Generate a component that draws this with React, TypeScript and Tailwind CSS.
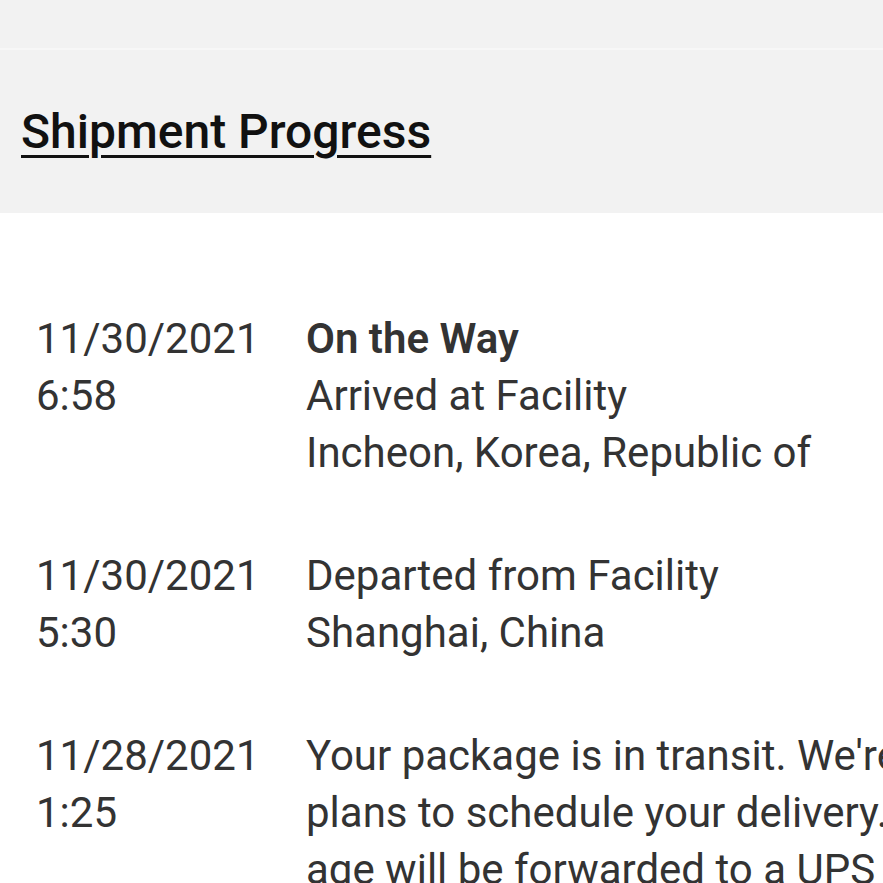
import React from "react";

interface Event {
  date: string;
  time: string;
  title?: string;
  lines: string[];
}

const events: Event[] = [
  {
    date: "11/30/2021",
    time: "6:58",
    title: "On the Way",
    lines: ["Arrived at Facility", "Incheon, Korea, Republic of"],
  },
  {
    date: "11/30/2021",
    time: "5:30",
    lines: ["Departed from Facility", "Shanghai, China"],
  },
  {
    date: "11/28/2021",
    time: "1:25",
    lines: [
      "Your package is in transit. We're updating",
      "plans to schedule your delivery. Your pack-",
      "age will be forwarded to a UPS facility in",
    ],
  },
];

export default function App() {
  return (
    <div
      className="w-[883px] h-[883px] overflow-hidden bg-white"
      style={{ fontFamily: "Roboto, 'Liberation Sans', sans-serif" }}
    >
      <div className="h-[48px] bg-[#f2f2f2]" />
      <div className="h-[2px] bg-[#f7f7f7]" />
      <div className="h-[163px] bg-[#f2f2f2] flex items-center px-[21px]">
        <h2 className="text-[48px] leading-none font-medium text-[#111] underline underline-offset-[7px] decoration-[3px]">
          Shipment Progress
        </h2>
      </div>
      <div className="pt-[97px] flex flex-col gap-[66px]">
        {events.map((ev, i) => (
          <div key={i} className="flex text-[42px] leading-[57px] text-[#333] whitespace-nowrap">
            <div className="w-[306px] shrink-0 pl-[36px]">
              <div>{ev.date}</div>
              <div>{ev.time}</div>
            </div>
            <div className="shrink-0">
              {ev.title && <div className="font-semibold">{ev.title}</div>}
              {ev.lines.map((l, j) => (
                <div key={j}>{l}</div>
              ))}
            </div>
          </div>
        ))}
      </div>
    </div>
  );
}
